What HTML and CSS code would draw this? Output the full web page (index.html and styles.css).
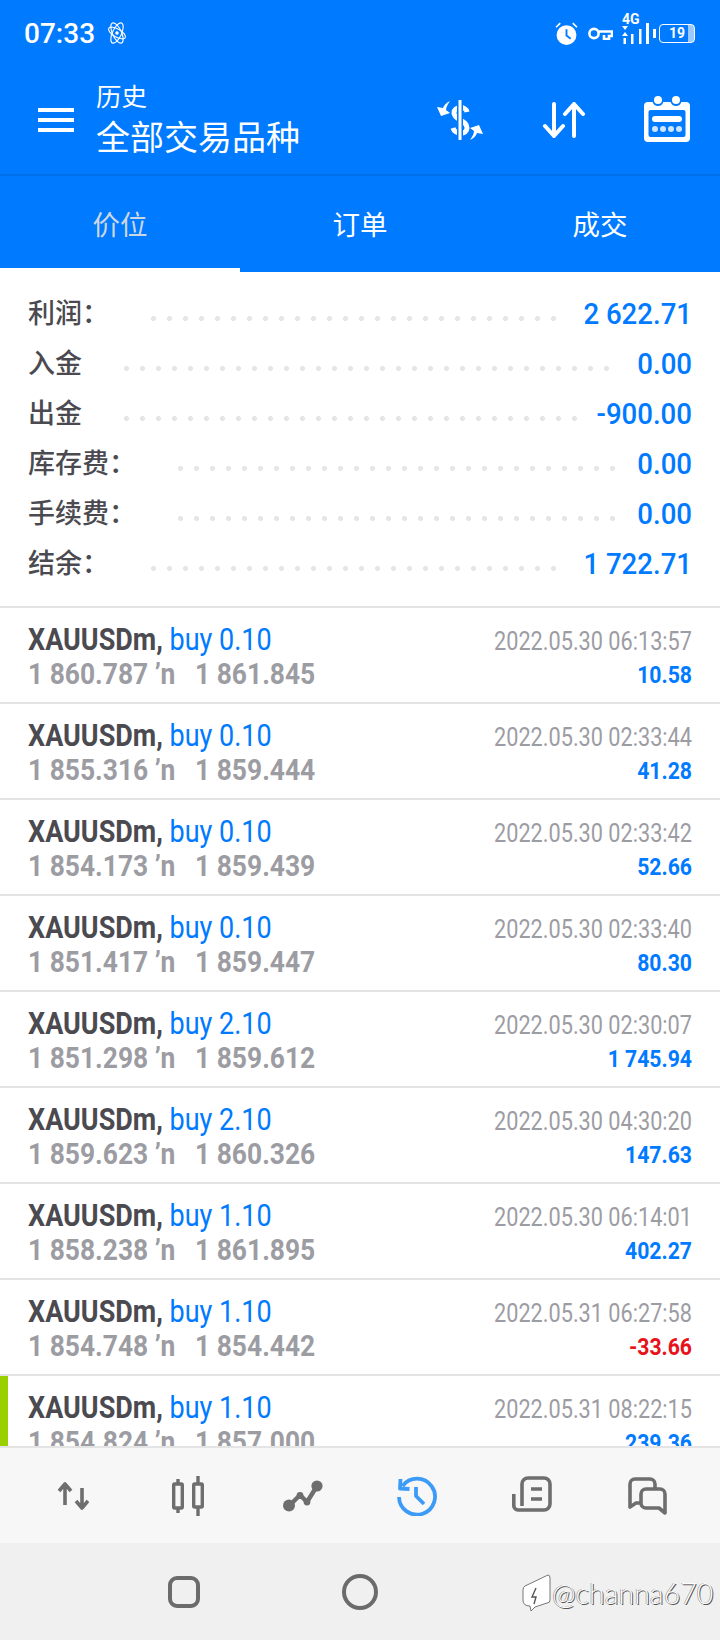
FILE: index.html
```html
<!DOCTYPE html>
<html lang="zh-CN">
<head>
    <meta charset="UTF-8">
    <meta name="viewport" content="width=device-width, initial-scale=1.0">
    <title>历史</title>
    <link rel="stylesheet" href="styles.css">
</head>
<body>
    <div class="app">
        <div class="header">
            <div class="status-bar">
                <span class="clock">07:33</span>
                <svg class="atom" viewBox="0 0 22 24" fill="none" stroke="#fff" stroke-width="1.1">
                    <ellipse cx="11" cy="12" rx="4.5" ry="11" transform="rotate(-25 11 12)"/>
                    <ellipse cx="11" cy="12" rx="4.5" ry="11" transform="rotate(25 11 12)"/>
                    <ellipse cx="11" cy="12" rx="9.5" ry="4" transform="rotate(30 11 12)"/>
                    <circle cx="11" cy="12" r="1.2" fill="#fff"/>
                </svg>
                <div class="status-icons">
                    <svg class="alarm" viewBox="0 0 22 22">
                        <circle cx="11" cy="12.5" r="9.5" fill="#fff"/>
                        <path d="M1 5 L5 1 M21 5 L17 1" stroke="#fff" stroke-width="1.6"/>
                        <path d="M11 7 V13 L15 16" fill="none" stroke="#007aff" stroke-width="1.8"/>
                    </svg>
                    <svg class="key" viewBox="0 0 25 13" fill="none" stroke="#fff" stroke-width="2.6">
                        <circle cx="6" cy="6.5" r="4.6"/>
                        <path d="M11 4.5 H24 V9 H21 V12 H16 V8"/>
                    </svg>
                    <div class="network">
                        <span class="net-type">4G</span>
                        <svg class="net-bars" viewBox="0 0 28 18" fill="#fff">
                            <path d="M1 0 H7 L4 4 Z M1 10 L4 6 L7 10 Z"/>
                            <rect x="2.5" y="12" width="2.5" height="6"/>
                            <rect x="10" y="8" width="2.5" height="10"/>
                            <rect x="18" y="3" width="2.5" height="15"/>
                        </svg>
                        <span class="net-tall"></span>
                    </div>
                    <span class="battery-cap"></span>
                    <span class="battery"><span class="battery-num">19</span></span>
                </div>
            </div>

            <div class="toolbar">
                <div class="menu-icon"><span></span><span></span><span></span></div>
                <div class="titles">
                    <div class="title-small">历史</div>
                    <div class="title-big">全部交易品种</div>
                </div>
                <div class="tool-icons">
                    <svg class="tool-dollar" viewBox="0 0 48 40">
                        <path d="M31 12 C30 6 18 6 18 13 C18 20 31 20 31 28 C31 35 19 35 17 28" fill="none" stroke="#fff" stroke-width="5"/>
                        <path d="M24 0 V40" stroke="#007aff" stroke-width="6"/>
                        <path d="M24 0 V40" stroke="#fff" stroke-width="3"/>
                        <path d="M14 1 C10 3 8 5 7 8 L1 7 L5 16 L14 13 L10 10 C10 7 12 4 14 1 Z" fill="#fff"/>
                        <path d="M14 1 C10 3 8 5 7 8 L1 7 L5 16 L14 13 L10 10 C10 7 12 4 14 1 Z" fill="#fff" transform="rotate(180 24 20) translate(0 -1)"/>
                    </svg>
                    <svg class="tool-sort" viewBox="0 0 44 36" fill="none" stroke="#fff" stroke-width="4" stroke-linecap="round" stroke-linejoin="round">
                        <path d="M12 2 V34 M3 24 L12 34 L21 24"/>
                        <path d="M32 34 V2 M23 12 L32 2 L41 12"/>
                    </svg>
                    <svg class="tool-calendar" viewBox="0 0 46 46">
                        <rect x="0" y="6" width="46" height="40" rx="4" fill="#fff"/>
                        <rect x="4.5" y="14" width="37" height="27" rx="2" fill="#007aff"/>
                        <circle cx="14" cy="4.5" r="5.5" fill="#007aff"/>
                        <circle cx="32" cy="4.5" r="5.5" fill="#007aff"/>
                        <circle cx="14" cy="4" r="4" fill="#fff"/>
                        <circle cx="32" cy="4" r="4" fill="#fff"/>
                        <rect x="8" y="20" width="30" height="6" rx="3" fill="#fff"/>
                        <g fill="#cfe4ff">
                            <circle cx="11" cy="33" r="3"/>
                            <circle cx="19" cy="33" r="3"/>
                            <circle cx="27" cy="33" r="3"/>
                            <circle cx="35" cy="33" r="3"/>
                        </g>
                    </svg>
                </div>
            </div>

            <div class="tabs">
                <div class="tab active">价位</div>
                <div class="tab">订单</div>
                <div class="tab">成交</div>
            </div>
        </div>

        <div class="summary">
            <div class="summary-row">
                <span class="label">利润：</span><span class="dots dots-26"></span><span class="amount"><span class="tall-sm">2 622.71</span></span>
            </div>
            <div class="summary-row">
                <span class="label">入金</span><span class="dots dots-31"></span><span class="amount"><span class="tall-sm">0.00</span></span>
            </div>
            <div class="summary-row">
                <span class="label">出金</span><span class="dots dots-29"></span><span class="amount"><span class="tall-sm">-900.00</span></span>
            </div>
            <div class="summary-row">
                <span class="label">库存费：</span><span class="dots dots-28"></span><span class="amount"><span class="tall-sm">0.00</span></span>
            </div>
            <div class="summary-row">
                <span class="label">手续费：</span><span class="dots dots-28"></span><span class="amount"><span class="tall-sm">0.00</span></span>
            </div>
            <div class="summary-row">
                <span class="label">结余：</span><span class="dots dots-26"></span><span class="amount"><span class="tall-sm">1 722.71</span></span>
            </div>
        </div>

        <div class="deal-list">
            <div class="deal">
                <div class="deal-left">
                    <div class="deal-name"><span class="tall"><b>XAUUSDm,</b> <span class="side">buy 0.10</span></span></div>
                    <div class="deal-price"><span class="tall">1 860.787 ʼn&nbsp;&nbsp;&nbsp;1 861.845</span></div>
                </div>
                <div class="deal-right">
                    <div class="deal-time"><span class="tall">2022.05.30 06:13:57</span></div>
                    <div class="deal-profit"><span class="tall">10.58</span></div>
                </div>
            </div>
            <div class="deal">
                <div class="deal-left">
                    <div class="deal-name"><span class="tall"><b>XAUUSDm,</b> <span class="side">buy 0.10</span></span></div>
                    <div class="deal-price"><span class="tall">1 855.316 ʼn&nbsp;&nbsp;&nbsp;1 859.444</span></div>
                </div>
                <div class="deal-right">
                    <div class="deal-time"><span class="tall">2022.05.30 02:33:44</span></div>
                    <div class="deal-profit"><span class="tall">41.28</span></div>
                </div>
            </div>
            <div class="deal">
                <div class="deal-left">
                    <div class="deal-name"><span class="tall"><b>XAUUSDm,</b> <span class="side">buy 0.10</span></span></div>
                    <div class="deal-price"><span class="tall">1 854.173 ʼn&nbsp;&nbsp;&nbsp;1 859.439</span></div>
                </div>
                <div class="deal-right">
                    <div class="deal-time"><span class="tall">2022.05.30 02:33:42</span></div>
                    <div class="deal-profit"><span class="tall">52.66</span></div>
                </div>
            </div>
            <div class="deal">
                <div class="deal-left">
                    <div class="deal-name"><span class="tall"><b>XAUUSDm,</b> <span class="side">buy 0.10</span></span></div>
                    <div class="deal-price"><span class="tall">1 851.417 ʼn&nbsp;&nbsp;&nbsp;1 859.447</span></div>
                </div>
                <div class="deal-right">
                    <div class="deal-time"><span class="tall">2022.05.30 02:33:40</span></div>
                    <div class="deal-profit"><span class="tall">80.30</span></div>
                </div>
            </div>
            <div class="deal">
                <div class="deal-left">
                    <div class="deal-name"><span class="tall"><b>XAUUSDm,</b> <span class="side">buy 2.10</span></span></div>
                    <div class="deal-price"><span class="tall">1 851.298 ʼn&nbsp;&nbsp;&nbsp;1 859.612</span></div>
                </div>
                <div class="deal-right">
                    <div class="deal-time"><span class="tall">2022.05.30 02:30:07</span></div>
                    <div class="deal-profit"><span class="tall">1 745.94</span></div>
                </div>
            </div>
            <div class="deal">
                <div class="deal-left">
                    <div class="deal-name"><span class="tall"><b>XAUUSDm,</b> <span class="side">buy 2.10</span></span></div>
                    <div class="deal-price"><span class="tall">1 859.623 ʼn&nbsp;&nbsp;&nbsp;1 860.326</span></div>
                </div>
                <div class="deal-right">
                    <div class="deal-time"><span class="tall">2022.05.30 04:30:20</span></div>
                    <div class="deal-profit"><span class="tall">147.63</span></div>
                </div>
            </div>
            <div class="deal">
                <div class="deal-left">
                    <div class="deal-name"><span class="tall"><b>XAUUSDm,</b> <span class="side">buy 1.10</span></span></div>
                    <div class="deal-price"><span class="tall">1 858.238 ʼn&nbsp;&nbsp;&nbsp;1 861.895</span></div>
                </div>
                <div class="deal-right">
                    <div class="deal-time"><span class="tall">2022.05.30 06:14:01</span></div>
                    <div class="deal-profit"><span class="tall">402.27</span></div>
                </div>
            </div>
            <div class="deal">
                <div class="deal-left">
                    <div class="deal-name"><span class="tall"><b>XAUUSDm,</b> <span class="side">buy 1.10</span></span></div>
                    <div class="deal-price"><span class="tall">1 854.748 ʼn&nbsp;&nbsp;&nbsp;1 854.442</span></div>
                </div>
                <div class="deal-right">
                    <div class="deal-time"><span class="tall">2022.05.31 06:27:58</span></div>
                    <div class="deal-profit loss"><span class="tall">-33.66</span></div>
                </div>
            </div>
            <div class="deal selected">
                <div class="deal-left">
                    <div class="deal-name"><span class="tall"><b>XAUUSDm,</b> <span class="side">buy 1.10</span></span></div>
                    <div class="deal-price"><span class="tall">1 854.824 ʼn&nbsp;&nbsp;&nbsp;1 857.000</span></div>
                </div>
                <div class="deal-right">
                    <div class="deal-time"><span class="tall">2022.05.31 08:22:15</span></div>
                    <div class="deal-profit"><span class="tall">239.36</span></div>
                </div>
            </div>
        </div>

        <div class="bottom-nav">
            <div class="nav-item">
                <svg width="32" height="28" viewBox="0 0 32 28" fill="none" stroke="#6e6e6e" stroke-width="3.6" stroke-linejoin="round">
                    <path d="M8 23 V2 M2 9 L8 2 L14 9"/>
                    <path d="M25 6 V26 M19 19 L25 26 L31 19"/>
                </svg>
            </div>
            <div class="nav-item">
                <svg width="32" height="40" viewBox="0 0 32 40" fill="none" stroke="#6e6e6e" stroke-width="3.4">
                    <path d="M6 3 V8 M6 32 V37 M26 0 V8 M26 31 V40"/>
                    <rect x="1.7" y="8" width="8.6" height="24" rx="1"/>
                    <rect x="21.7" y="8" width="8.6" height="23" rx="1"/>
                </svg>
            </div>
            <div class="nav-item">
                <svg width="40" height="32" viewBox="0 0 40 32" fill="none" stroke="#6e6e6e" stroke-width="4.4" stroke-linejoin="round">
                    <path d="M6 26 L17 15 L24 22 L34 6"/>
                    <g fill="#6e6e6e" stroke="none">
                        <circle cx="6" cy="25.5" r="6"/>
                        <circle cx="17" cy="15.5" r="3.4"/>
                        <circle cx="24" cy="22" r="3.4"/>
                        <circle cx="34" cy="6" r="5.6"/>
                    </g>
                </svg>
            </div>
            <div class="nav-item">
                <svg width="42" height="40" viewBox="0 0 42 40" fill="none" stroke="#3d9bf8" stroke-width="3.8" stroke-linejoin="round">
                    <path d="M6.5 10 A18 18 0 1 1 3 21"/>
                    <path d="M4.5 3 L4 12.5 L13.5 13"/>
                    <path d="M20 11 V20 L28 28"/>
                </svg>
            </div>
            <div class="nav-item">
                <svg class="nav-shift" width="40" height="36" viewBox="0 0 40 36" fill="none" stroke="#6e6e6e" stroke-width="3.6">
                    <path d="M10 30 V8 A6 6 0 0 1 16 2 H32 A6 6 0 0 1 38 8 V28 A6 6 0 0 1 32 34 H6 A4.4 4.4 0 0 1 1.8 29.5 V18"/>
                    <path d="M19 13 H30 M19 23 H30"/>
                </svg>
            </div>
            <div class="nav-item">
                <svg width="40" height="38" viewBox="0 0 40 38" fill="none" stroke="#6e6e6e" stroke-width="3.6" stroke-linejoin="round">
                    <path d="M14 26 H9 L3 30 V7 A5 5 0 0 1 8 2 H23 A5 5 0 0 1 28 7 V12"/>
                    <path d="M19 12 H33 A5 5 0 0 1 38 17 V36 L32 31 H19 A5 5 0 0 1 14 26 V17 A5 5 0 0 1 19 12 Z"/>
                </svg>
            </div>
        </div>

        <div class="system-bar">
            <div class="sys-button"><span class="sys-square"></span></div>
            <div class="sys-button"><span class="sys-circle"></span></div>
            <div class="sys-button"></div>
        </div>

        <!-- 水印 -->
        <div class="watermark">
            <svg class="watermark-logo" viewBox="0 0 30 38">
                <path d="M4 12 L27 1 Q29 1 29 4 V26 Q29 29 26 29 L14 33 L10 37 L9 32 Q2 32 2 26 V16 Q2 13 4 12 Z" fill="#fff" stroke="#555" stroke-width="0.8"/>
                <path d="M15 14 L11 23 H15 L13 30" fill="none" stroke="#555" stroke-width="1.4"/>
            </svg>
            <span class="watermark-text">@channa670</span>
        </div>
    </div>
</body>
</html>
```

FILE: styles.css
```css
* {
    box-sizing: border-box;
}

body {
    margin: 0;
    background-color: #fff;
    font-family: Roboto, "Noto Sans CJK SC", sans-serif;
    color: #4a4a50;
}

.app {
    position: relative;
    display: flex;
    flex-direction: column;
    width: 720px;
    height: 1640px;
    overflow: hidden;
}

/* 顶部蓝色区域 */
.header {
    flex-shrink: 0;
    background-color: #007aff;
    color: #fff;
}

.status-bar {
    display: flex;
    align-items: center;
    height: 66px;
    padding: 0 25px 0 24px;
}

.clock {
    font-size: 28px;
    font-weight: 500;
}

.atom {
    width: 22px;
    height: 24px;
    margin-left: 11px;
}

.status-icons {
    display: flex;
    align-items: center;
    margin-left: auto;
}

.alarm {
    width: 23px;
    height: 23px;
}

.key {
    width: 25px;
    height: 13px;
    margin-left: 10px;
}

.network {
    position: relative;
    width: 30px;
    height: 27px;
    margin-left: 8px;
    margin-top: -6px;
}

.net-type {
    position: absolute;
    top: -6px;
    left: 1px;
    font-size: 14px;
    line-height: 16px;
    font-weight: 700;
}

.net-bars {
    position: absolute;
    left: 0;
    bottom: 0;
    width: 28px;
    height: 18px;
}

.net-tall {
    position: absolute;
    right: 2px;
    bottom: 0;
    width: 3px;
    height: 21px;
    background-color: #fff;
}

.battery-cap {
    width: 3px;
    height: 9px;
    margin-left: 2px;
    background-color: #fff;
}

.battery {
    display: flex;
    align-items: center;
    justify-content: center;
    width: 36px;
    height: 19px;
    margin-left: 3px;
    border: 1.5px solid #fff;
    border-radius: 4px;
    background: linear-gradient(to left, #9ccaff 6px, transparent 6px);
}

.battery-num {
    font-size: 14px;
    font-weight: 700;
}

.toolbar {
    display: flex;
    align-items: center;
    height: 110px;
    padding: 0 30px 0 38px;
    border-bottom: 2px solid #0070ea;
}

.menu-icon {
    display: flex;
    flex-direction: column;
    gap: 5.5px;
    width: 36px;
}

.menu-icon span {
    height: 4.5px;
    background-color: #fff;
}

.titles {
    margin-left: 22px;
    margin-top: 2px;
}

.title-small {
    font-size: 25.5px;
    line-height: 33px;
}

.title-big {
    font-size: 34px;
    line-height: 48px;
}

.tool-icons {
    display: flex;
    align-items: center;
    margin-left: auto;
}

.tool-dollar {
    width: 48px;
    height: 40px;
}

.tool-sort {
    width: 44px;
    height: 36px;
    margin-left: 58px;
}

.tool-calendar {
    width: 46px;
    height: 46px;
    margin-left: 58px;
    margin-top: -2px;
}

.tabs {
    display: flex;
    height: 96px;
}

.tab {
    flex: 1;
    padding-top: 30px;
    border-bottom: 4px solid transparent;
    font-size: 27.5px;
    line-height: 40px;
    text-align: center;
}

.tab.active {
    border-bottom-color: #fff;
    color: #cdd7e4;
}

/* 汇总 */
.summary {
    flex-shrink: 0;
    padding: 16px 28px 18px;
    border-bottom: 2px solid #e4e4e4;
}

.summary-row {
    display: flex;
    align-items: center;
    height: 50px;
}

.label {
    margin-top: -4px;
    font-size: 27px;
    font-weight: 500;
}

.dots {
    height: 5px;
    margin-left: 42px;
    margin-top: 10px;
    background: radial-gradient(circle at 2.5px 2.5px, #e6e6e6 2.2px, transparent 2.8px) left top / 16px 5px repeat-x;
}

.dots-26 { width: 405px; }
.dots-28 { width: 437px; }
.dots-29 { width: 453px; }
.dots-31 { width: 485px; }

.amount {
    margin-top: 2px;
    margin-left: auto;
    color: #007aff;
    font-size: 27.6px;
    font-weight: 500;
}

.tall-sm {
    display: inline-block;
    transform: scaleY(1.05);
}

/* 成交列表 */
.deal-list {
    flex: 1;
    min-height: 0;
    overflow: hidden;
}

.deal {
    display: flex;
    justify-content: space-between;
    height: 96px;
    padding: 15px 28px 0;
    border-bottom: 2px solid #e4e4e4;
}

.deal.selected {
    border-left: 8px solid #9bd000;
    padding-left: 20px;
}

.tall {
    display: inline-block;
    transform: scaleY(1.15);
}

.deal-name,
.deal-price {
    line-height: 34px;
    white-space: nowrap;
}

.deal-name {
    font-size: 27px;
}

.deal-name b {
    font-weight: 700;
}

.side {
    color: #007aff;
}

.deal-price {
    color: #9c9ca3;
    font-size: 26.4px;
    font-weight: 700;
}

.deal-right {
    padding-top: 2px;
    text-align: right;
}

.deal-time {
    color: #9c9ca3;
    font-size: 21.7px;
    line-height: 34px;
}

.deal-profit {
    margin-top: -1px;
    color: #007aff;
    font-size: 21.2px;
    font-weight: 700;
    line-height: 34px;
}

.deal-profit.loss {
    color: #e8131a;
}

/* 底部导航 */
.bottom-nav {
    flex-shrink: 0;
    display: flex;
    align-items: center;
    height: 97px;
    padding: 0 16px;
    border-top: 2px solid #e4e4e4;
    background-color: #f7f7f7;
}

.nav-item {
    display: flex;
    flex: 1;
    justify-content: center;
}

.nav-shift {
    margin-top: -4px;
}

.system-bar {
    flex-shrink: 0;
    display: flex;
    justify-content: center;
    height: 97px;
    background-color: #f0f0f0;
}

.sys-button {
    display: flex;
    align-items: center;
    justify-content: center;
    width: 176px;
}

.sys-square {
    width: 32px;
    height: 32px;
    border: 4px solid #6b6b6b;
    border-radius: 9px;
}

.sys-circle {
    width: 36px;
    height: 36px;
    border: 4px solid #6b6b6b;
    border-radius: 50%;
}

.watermark {
    position: absolute;
    left: 521px;
    top: 1574px;
    display: flex;
    align-items: center;
    gap: 1px;
}

.watermark-logo {
    width: 30px;
    height: 38px;
}

.watermark-text {
    color: #fff;
    font-family: Lato, sans-serif;
    font-size: 28.5px;
    font-weight: 300;
    text-shadow: 1px 1px 0 #555, -0.5px -0.5px 0 #777;
}
```
